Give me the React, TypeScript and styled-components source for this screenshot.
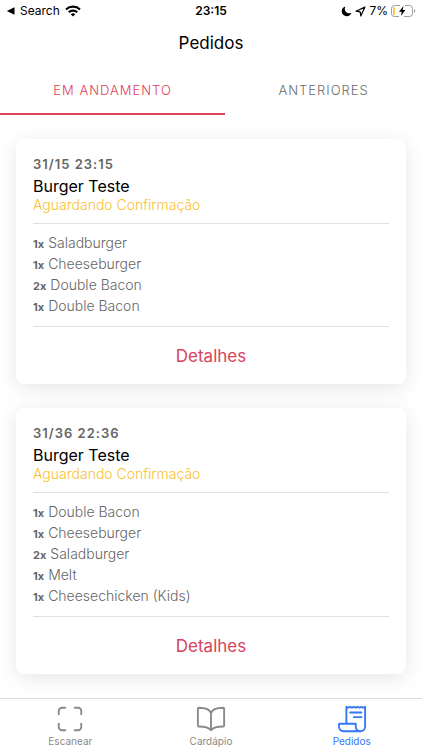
import React, { useState } from "react";
import styled, { createGlobalStyle } from "styled-components";
import {
  IoBookOutline,
  IoMoon,
  IoReceiptOutline,
  IoScanOutline,
} from "react-icons/io5";

const GlobalStyle = createGlobalStyle`
  * { box-sizing: border-box; }
  body {
    margin: 0;
    background: #ffffff;
    font-family: Inter, "Liberation Sans", sans-serif;
    color: #000000;
  }
  button { font: inherit; color: inherit; background: none; border: 0; padding: 0; margin: 0; cursor: pointer; }
`;

const Screen = styled.div`
  display: flex;
  flex-direction: column;
  height: 100vh;
  overflow: hidden;
`;

const StatusBar = styled.header`
  display: grid;
  grid-template-columns: 1fr auto 1fr;
  align-items: center;
  height: 22px;
  padding: 0 6px;
  font-size: 12px;
  line-height: 22px;
`;

const StatusGroup = styled.div<{ $end?: boolean }>`
  display: flex;
  align-items: center;
  justify-content: ${(p) => (p.$end ? "flex-end" : "flex-start")};
  gap: ${(p) => (p.$end ? "3px" : "5px")};
`;

const Back = styled.button`
  display: flex;
  align-items: center;
  gap: 5px;
`;

const Clock = styled.time`
  font-weight: 600;
`;

const Title = styled.h1`
  margin: 0;
  padding: 9px 0 11px;
  font-size: 17px;
  line-height: 24px;
  font-weight: 400;
  text-align: center;
`;

const Tabs = styled.nav`
  display: flex;
`;

const Tab = styled.button<{ $active: boolean }>`
  flex: 1 1 auto;
  height: 49px;
  border-bottom: 2px solid ${(p) => (p.$active ? "#e0405a" : "transparent")};
  color: ${(p) => (p.$active ? "#e0405a" : "#6c6c6c")};
  font-size: 13px;
  line-height: 16px;
  font-weight: 300;
  letter-spacing: 1px;
`;

const Orders = styled.main`
  flex: 1;
  min-height: 0;
  overflow-x: hidden;
  overflow-y: auto;
  scrollbar-width: none;
  display: flex;
  flex-direction: column;
  gap: 24px;
  padding: 24px 16px;
`;

const Card = styled.article`
  flex: none;
  padding: 14px 17px 0;
  border-radius: 8px;
  background: #ffffff;
  box-shadow: 0 4px 20px rgba(0, 0, 0, 0.1);
`;

const OrderDate = styled.p`
  margin: 0;
  color: #666666;
  font-size: 13px;
  line-height: 22px;
  font-weight: 600;
  letter-spacing: 1px;
`;

const Restaurant = styled.h2`
  margin: 0;
  font-size: 16px;
  line-height: 22px;
  font-weight: 400;
`;

const Status = styled.p`
  margin: 0 0 10px;
  color: #f9bf30;
  font-size: 14px;
  line-height: 16px;
  font-weight: 300;
`;

const Items = styled.ul`
  margin: 0;
  padding: 8px 0 10px;
  list-style: none;
  border: solid #e0e0e0;
  border-width: 1px 0;
`;

const Item = styled.li`
  display: flex;
  align-items: baseline;
  gap: 4px;
  height: 21px;
  color: #666666;
  font-size: 14px;
  line-height: 21px;
  font-weight: 300;
`;

const Quantity = styled.strong`
  font-size: 11px;
  line-height: 14px;
  font-weight: 700;
`;

const Details = styled.button`
  display: block;
  width: 100%;
  height: 57px;
  color: #d9435c;
  font-size: 17px;
  line-height: 24px;
`;

const BottomBar = styled.nav`
  display: flex;
  height: 52px;
  border-top: 1px solid #dcdcdc;
  background: #ffffff;
`;

const NavButton = styled.button<{ $active?: boolean }>`
  flex: 1;
  display: flex;
  flex-direction: column;
  align-items: center;
  padding-top: 5px;
  color: ${(p) => (p.$active ? "#3478f6" : "#8a8a8a")};
  font-size: 10px;
  line-height: 14px;
`;

const WifiIcon = () => (
  <svg width="16" height="12" viewBox="0 0 16 12" fill="none" stroke="currentColor" strokeWidth="2.1" aria-hidden="true">
    <path d="M1 4.4a10.2 10.2 0 0 1 14 0" />
    <path d="M3.7 7.3a6.3 6.3 0 0 1 8.6 0" />
    <path d="M8 11.6 5.7 9.2a3.4 3.4 0 0 1 4.6 0Z" fill="currentColor" stroke="none" />
  </svg>
);

const BackArrow = () => (
  <svg width="9" height="8" viewBox="0 0 9 8" aria-hidden="true">
    <path d="M8.5 0.3v7.4L0.8 4Z" fill="currentColor" />
  </svg>
);

const LocationIcon = () => (
  <svg width="11" height="11" viewBox="0 0 11 11" aria-hidden="true">
    <path d="M9.9 1.1 1 5.2l4.2.6.6 4.2Z" fill="none" stroke="currentColor" strokeWidth="1.2" strokeLinejoin="round" />
  </svg>
);

const BatteryIcon = () => (
  <svg width="25" height="12" viewBox="0 0 25 12" role="img" aria-label="Carregando">
    <path
      d="M9 .5H3.500a3 3 0 0 0-3 3v5a3 3 0 0 0 3 3H8M14 .5h4.500a3 3 0 0 1 3 3v5a3 3 0 0 1-3 3H13"
      fill="none"
      stroke="#9c9c9c"
    />
    <path d="M23 4v4c1.700-.6 1.700-3.400 0-4Z" fill="#9c9c9c" />
    <rect x="2" y="2" width="2" height="8" rx="1" fill="#f7cb46" />
    <path d="M12.400 1 8 6.800h2.700L9.900 11l4.500-5.900h-2.700Z" fill="#000000" />
  </svg>
);

type Order = {
  date: string;
  restaurant: string;
  status: string;
  items: [number, string][];
};

const orders: Order[] = [
  {
    date: "31/15 23:15",
    restaurant: "Burger Teste",
    status: "Aguardando Confirmação",
    items: [
      [1, "Saladburger"],
      [1, "Cheeseburger"],
      [2, "Double Bacon"],
      [1, "Double Bacon"],
    ],
  },
  {
    date: "31/36 22:36",
    restaurant: "Burger Teste",
    status: "Aguardando Confirmação",
    items: [
      [1, "Double Bacon"],
      [1, "Cheeseburger"],
      [2, "Saladburger"],
      [1, "Melt"],
      [1, "Cheesechicken (Kids)"],
    ],
  },
];

const OrderCard = ({ order }: { order: Order }) => (
  <Card>
    <OrderDate>{order.date}</OrderDate>
    <Restaurant>{order.restaurant}</Restaurant>
    <Status>{order.status}</Status>
    <Items>
      {order.items.map(([quantity, name], index) => (
        <Item key={index}>
          <Quantity>{quantity}x</Quantity>
          <span>{name}</span>
        </Item>
      ))}
    </Items>
    <Details type="button">Detalhes</Details>
  </Card>
);

export default function App() {
  const [tab, setTab] = useState(0);
  return (
    <Screen>
      <GlobalStyle />
      <StatusBar>
        <StatusGroup>
          <Back type="button">
            <BackArrow />
            Search
          </Back>
          <WifiIcon />
        </StatusGroup>
        <Clock>23:15</Clock>
        <StatusGroup $end>
          <IoMoon size={11} />
          <LocationIcon />
          <span>7%</span>
          <BatteryIcon />
        </StatusGroup>
      </StatusBar>
      <Title>Pedidos</Title>
      <Tabs>
        {["EM ANDAMENTO", "ANTERIORES"].map((label, index) => (
          <Tab key={label} type="button" $active={tab === index} onClick={() => setTab(index)}>
            {label}
          </Tab>
        ))}
      </Tabs>
      <Orders>
        {orders.map((order) => (
          <OrderCard key={order.date} order={order} />
        ))}
      </Orders>
      <BottomBar>
        <NavButton type="button">
          <IoScanOutline size={30} />
          Escanear
        </NavButton>
        <NavButton type="button">
          <IoBookOutline size={30} />
          Cardápio
        </NavButton>
        <NavButton type="button" $active>
          <IoReceiptOutline size={30} />
          Pedidos
        </NavButton>
      </BottomBar>
    </Screen>
  );
}
